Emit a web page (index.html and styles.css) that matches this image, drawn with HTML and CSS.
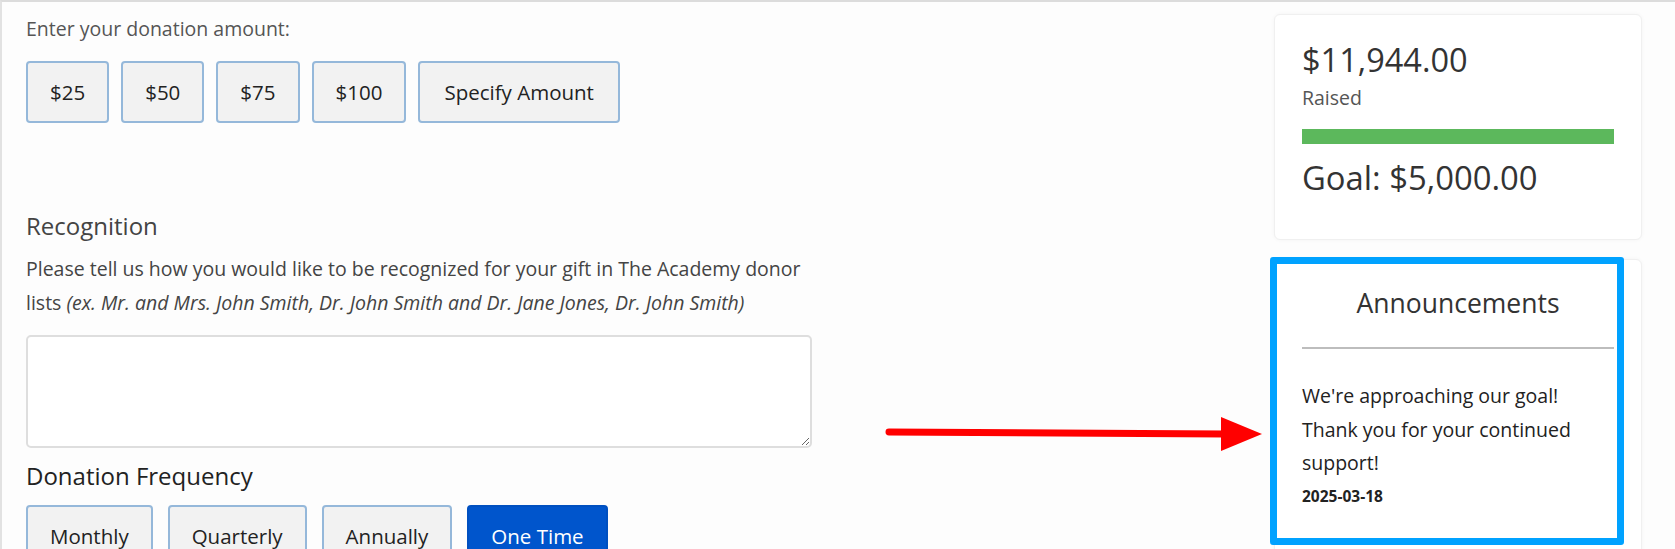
FILE: index.html
```html
<!DOCTYPE html>
<html lang="en">
<head>
    <meta charset="UTF-8">
    <meta name="viewport" content="width=device-width, initial-scale=1.0">
    <title>Donate</title>
    <link rel="stylesheet" href="styles.css">
</head>
<body>
    <div class="page">
        <div class="form-col">
            <p class="label">Enter your donation amount:</p>
            <div class="btn-row amounts">
                <button type="button" class="choice">$25</button>
                <button type="button" class="choice">$50</button>
                <button type="button" class="choice">$75</button>
                <button type="button" class="choice">$100</button>
                <button type="button" class="choice wide">Specify Amount</button>
            </div>

            <h3 class="section-title">Recognition</h3>
            <p class="help">Please tell us how you would like to be recognized for your gift in The Academy donor lists <em>(ex. Mr. and Mrs. John Smith, Dr. John Smith and Dr. Jane Jones, Dr. John Smith)</em></p>
            <textarea class="recognition-input"></textarea>

            <h3 class="freq-title">Donation Frequency</h3>
            <div class="btn-row frequency">
                <button type="button" class="choice">Monthly</button>
                <button type="button" class="choice">Quarterly</button>
                <button type="button" class="choice">Annually</button>
                <button type="button" class="choice active">One Time</button>
            </div>
        </div>

        <aside class="sidebar">
            <div class="card progress-card">
                <div class="raised-amount">$11,944.00</div>
                <div class="raised-label">Raised</div>
                <div class="progress"><div class="progress-bar" style="width: 100%"></div></div>
                <div class="goal">Goal: $5,000.00</div>
            </div>
            <div class="card announce-card">
                <h4 class="announce-title">Announcements</h4>
                <div class="announce-body">
                    <p>We're approaching our goal! Thank you for your continued support!</p>
                    <span class="announce-date">2025-03-18</span>
                </div>
            </div>
            <!-- highlight box drawn on top of the announcements card -->
            <div class="highlight"></div>
        </aside>

        <svg class="arrow" width="384" height="40" viewBox="0 0 384 40">
            <line x1="4" y1="15" x2="340" y2="17" stroke="#ff0000" stroke-width="7" stroke-linecap="round"/>
            <polygon points="336,0 377,17 336,34" fill="#ff0000"/>
        </svg>
    </div>
</body>
</html>
```

FILE: styles.css
```css
body {
    font-family: "Open Sans", "Noto Sans", sans-serif;
    background-color: #fdfdfd;
    color: #444;
    margin: 0;
    padding: 0;
}
.page {
    position: relative;
    display: flex;
    justify-content: space-between;
    height: 549px;
    box-sizing: border-box;
    border-top: 2px solid #dcdcdc;
    border-left: 2px solid #e2e2e2;
    overflow: hidden;
}
.form-col {
    width: 786px;
    padding-left: 24px;
    padding-top: 10px;
}
.label {
    margin: 0;
    font-size: 19.5px;
    line-height: 34px;
    color: #555;
}
.btn-row {
    display: flex;
    gap: 12px;
    margin-top: 15px;
}
.btn-row.frequency {
    gap: 15px;
    margin-top: 12px;
}
.choice {
    font-family: "Open Sans", "Noto Sans", sans-serif;
    font-size: 20.5px;
    line-height: 28px;
    color: #222;
    background: #f2f2f2;
    border: 2px solid #95b8da;
    border-radius: 4px;
    padding: 15px 22px;
    cursor: pointer;
}
.choice.wide {
    padding: 15px 24px;
}
.choice.active {
    background: #0055cc;
    border-color: #0050c0;
    color: #fff;
}
.section-title {
    margin: 86px 0 0;
    font-size: 24px;
    font-weight: normal;
    line-height: 34px;
    color: #444;
}
.help {
    margin: 9px 0 0;
    font-size: 19.5px;
    line-height: 34px;
    color: #444;
}
.recognition-input {
    display: block;
    width: 100%;
    height: 113px;
    margin-top: 15px;
    box-sizing: border-box;
    border: 2px solid #dedede;
    border-radius: 5px;
    background: #fff;
}
.freq-title {
    margin: 11px 0 0;
    font-size: 24px;
    font-weight: normal;
    line-height: 34px;
    color: #222;
}
.sidebar {
    position: relative;
    width: 368px;
    margin-right: 33px;
    padding-top: 12px;
}
.card {
    background: #fff;
    border: 1px solid #f0f0f0;
    border-radius: 6px;
    box-shadow: 0 0 4px rgba(0, 0, 0, 0.04);
    padding: 0 27px;
}
.progress-card {
    height: 226px;
    box-sizing: border-box;
    padding-top: 24px;
}
.raised-amount {
    font-size: 32.5px;
    line-height: 42px;
    color: #333;
}
.raised-label {
    margin-top: 4px;
    font-size: 19.5px;
    line-height: 26px;
    color: #555;
}
.progress {
    margin-top: 18px;
    height: 15px;
    background: #eee;
}
.progress-bar {
    height: 100%;
    background: #5cb85c;
}
.goal {
    margin-top: 13px;
    font-size: 32.8px;
    line-height: 42px;
    color: #333;
}
.announce-card {
    margin-top: 19px;
    height: 300px;
}
.announce-title {
    margin: 0;
    padding-top: 23px;
    padding-bottom: 24px;
    font-size: 26.5px;
    font-weight: normal;
    line-height: 40px;
    text-align: center;
    color: #333;
    border-bottom: 2px solid #bdbdbd;
}
.announce-body {
    padding-top: 30px;
}
.announce-body p {
    margin: 0;
    font-size: 19.5px;
    line-height: 33.5px;
    color: #222;
}
.announce-date {
    display: block;
    margin-top: 5px;
    font-size: 15.5px;
    font-weight: bold;
    color: #222;
}
.highlight {
    position: absolute;
    left: -4px;
    top: 255px;
    width: 354px;
    height: 288px;
    box-sizing: border-box;
    border: 7px solid #00a2ff;
    border-radius: 3px;
}
.arrow {
    position: absolute;
    left: 883px;
    top: 415px;
}
```
